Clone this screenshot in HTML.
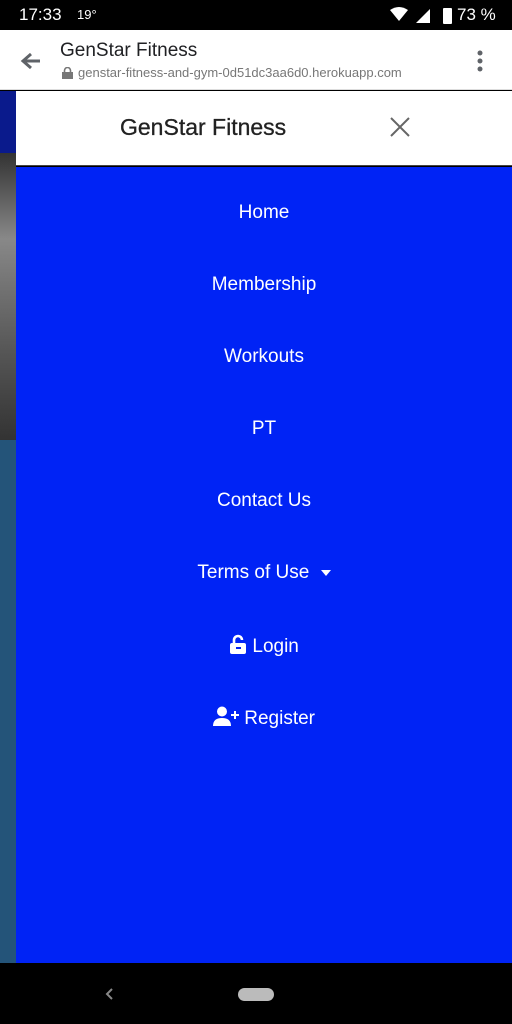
<!DOCTYPE html>
<html><head><meta charset="utf-8"><style>
*{margin:0;padding:0;box-sizing:border-box}
body{width:512px;height:1024px;position:relative;overflow:hidden;background:#000;font-family:"Liberation Sans",sans-serif}
.abs{position:absolute}
.status{left:0;top:0;width:512px;height:30px;background:#000;color:#fff}
.urlbar{left:0;top:30px;width:512px;height:60px;background:#fff;border-bottom:1px solid #ddd}
.nav{left:0;top:963px;width:512px;height:61px;background:#000}
.item{position:absolute;left:16px;width:496px;text-align:center;color:#fff;font-size:19px}
</style></head><body>
<div class="abs status">
<span class="abs" style="left:19px;top:5px;font-size:17px">17:33</span>
<span class="abs" style="left:77px;top:7px;font-size:13px">19°</span>
<svg class="abs" style="left:390px;top:7px" width="70" height="17"><path d="M0 3 Q9 -3 18 3 L9 14Z" fill="#fff"/><path d="M26 16 L40 2 L40 16Z" fill="#fff"/><rect x="53" y="1" width="9" height="16" rx="1" fill="#fff"/></svg>
<span class="abs" style="left:457px;top:5px;font-size:17px">73 %</span>
</div>
<div class="abs urlbar">
<svg class="abs" style="left:20px;top:22px" width="22" height="18"><path d="M20 9H4M11 2L3 9L11 16" stroke="#5f6368" stroke-width="3" fill="none"/></svg>
<span class="abs" style="left:60px;top:10px;font-size:19px;color:#202124">GenStar Fitness</span>
<svg class="abs" style="left:62px;top:37px" width="11" height="12"><rect x="0" y="5" width="11" height="7" fill="#777"/><path d="M2.5 6V3.5a3 3 0 0 1 6 0V6" stroke="#777" stroke-width="1.6" fill="none"/></svg>
<span class="abs" style="left:78px;top:35px;font-size:13px;color:#777">genstar-fitness-and-gym-0d51dc3aa6d0.herokuapp.com</span>
<svg class="abs" style="left:476px;top:20px" width="8" height="22"><circle cx="4" cy="3" r="2.5" fill="#5f6368"/><circle cx="4" cy="11" r="2.5" fill="#5f6368"/><circle cx="4" cy="19" r="2.5" fill="#5f6368"/></svg>
</div>
<div class="abs" style="left:0;top:91px;width:16px;height:62px;background:#0a1a8c"></div>
<div class="abs" style="left:0;top:153px;width:16px;height:287px;background:linear-gradient(#333,#888 30%,#555 70%,#333)"></div>
<div class="abs" style="left:0;top:440px;width:16px;height:523px;background:#245479"></div>
<div class="abs" style="left:16px;top:91px;width:496px;height:75px;background:#fff;border-bottom:1px solid #444"></div>
<span class="abs" style="left:120px;top:114px;font-size:23px;color:#222;-webkit-text-stroke:0.3px #222">GenStar Fitness</span>
<svg class="abs" style="left:389px;top:116px" width="22" height="22"><path d="M2 2L20 20M20 2L2 20" stroke="#666" stroke-width="2"/></svg>
<div class="abs" style="left:16px;top:167px;width:496px;height:796px;background:#0023f5"></div>
<div class="item" style="top:202px">Home</div>
<div class="item" style="top:274px">Membership</div>
<div class="item" style="top:346px">Workouts</div>
<div class="item" style="top:418px">PT</div>
<div class="item" style="top:490px">Contact Us</div>
<div class="item" style="top:562px">Terms of Use <span style="display:inline-block;width:0;height:0;border-left:5px solid transparent;border-right:5px solid transparent;border-top:6px solid #fff;vertical-align:middle;margin-left:6px"></span></div>
<div class="item" style="top:634px"><svg width="18" height="20" style="vertical-align:-2px"><path d="M5 9V6a4 4 0 0 1 8 0" stroke="#fff" stroke-width="2.6" fill="none"/><rect x="1" y="9" width="16" height="11" rx="2" fill="#fff"/><rect x="7" y="13" width="5" height="2" fill="#0023f5"/></svg> Login</div>
<div class="item" style="top:706px"><svg width="26" height="20" style="vertical-align:-2px"><circle cx="9" cy="5.5" r="5" fill="#fff"/><path d="M0 20Q0 12 9 12Q18 12 18 20Z" fill="#fff"/><path d="M22 5v8M18 9h8" stroke="#fff" stroke-width="2"/></svg> Register</div>
<div class="abs nav">
<svg class="abs" style="left:104px;top:24px" width="10" height="14"><path d="M8 2L3 7L8 12" stroke="#888" stroke-width="2" fill="none"/></svg>
<div class="abs" style="left:238px;top:25px;width:36px;height:13px;border-radius:7px;background:#bbb"></div>
</div>
</body></html>
